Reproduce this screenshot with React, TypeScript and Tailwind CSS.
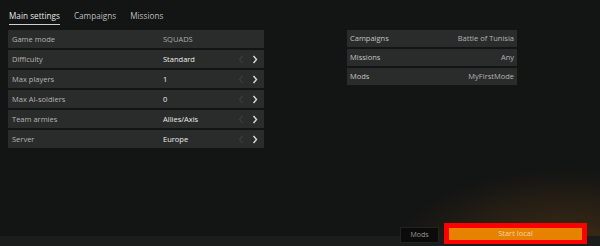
import React from 'react';

const settings = [
  { label: 'Game mode', value: 'SQUADS', arrows: false },
  { label: 'Difficulty', value: 'Standard', arrows: true },
  { label: 'Max players', value: '1', arrows: true },
  { label: 'Max AI-soldiers', value: '0', arrows: true },
  { label: 'Team armies', value: 'Allies/Axis', arrows: true },
  { label: 'Server', value: 'Europe', arrows: true },
];

const summary = [
  { label: 'Campaigns', value: 'Battle of Tunisia' },
  { label: 'Missions', value: 'Any' },
  { label: 'Mods', value: 'MyFirstMode' },
];

function Chevron({ left, dim }: { left?: boolean; dim?: boolean }) {
  return (
    <svg width="6" height="9" viewBox="0 0 6 9" className={dim ? 'text-[#3a3b3b]' : 'text-[#d8d8d8]'}>
      <path
        d={left ? 'M4.5 1 L1.5 4.5 L4.5 8' : 'M1.5 1 L4.5 4.5 L1.5 8'}
        fill="none"
        stroke="currentColor"
        strokeWidth="1.4"
      />
    </svg>
  );
}

export default function App() {
  return (
    <div
      className="relative w-[600px] h-[246px] overflow-hidden bg-[#131414] text-[#c8c8c8] flex flex-col"
      style={{ fontFamily: '"Open Sans", "DejaVu Sans", sans-serif' }}
    >
      <div className="pointer-events-none absolute inset-0 bg-[radial-gradient(ellipse_170px_80px_at_565px_250px,rgba(150,95,20,0.35),transparent)]" />
      <div className="flex gap-[14px] pl-[9px] pt-[10px] text-[8.2px]">
        <div className="flex flex-col">
          <span className="text-[#e6e6e6]">Main settings</span>
          <div className="h-[1px] mt-[2px] bg-[#cfcfcf]" />
        </div>
        <span className="text-[#bdbdbd]">Campaigns</span>
        <span className="text-[#bdbdbd]">Missions</span>
      </div>

      <div className="flex justify-between pl-[8px] pr-[83px] mt-[5px]">
        <div className="w-[256px] flex flex-col gap-[2px]">
          {settings.map((s) => (
            <div key={s.label} className="h-[18px] bg-[#2a2b2b] flex items-center text-[7.5px] pl-[4px] pr-[6px]">
              <span className="w-[151px] text-[#b4b4b4]">{s.label}</span>
              <span className={s.arrows ? 'flex-1 text-[#ececec] font-medium' : 'flex-1 text-[#a8a8a8]'}>{s.value}</span>
              {s.arrows && (
                <div className="flex items-center gap-[8px]">
                  <Chevron left dim />
                  <Chevron />
                </div>
              )}
            </div>
          ))}
        </div>

        <div className="w-[170px] flex flex-col gap-[2px]">
          {summary.map((s) => (
            <div key={s.label} className="h-[17px] bg-[#2a2b2b] flex items-center justify-between text-[7.5px] px-[3px]">
              <span className="text-[#c4c4c4]">{s.label}</span>
              <span className="text-[#b4b4b4]">{s.value}</span>
            </div>
          ))}
        </div>
      </div>

      <div className="flex-1" />
      <div className="relative flex items-end justify-end gap-[5px] pr-[13px] pb-[2px]">
        <div className="absolute left-0 right-0 bottom-0 h-[10px] bg-[#1b1c1c]" />
        <div className="relative mb-[1px] w-[39px] h-[16px] bg-[#0b0b0b] border border-[#222] flex items-center justify-center text-[7px] text-[#9a9a9a]">
          Mods
        </div>
        <div className="relative w-[143px] h-[21px] bg-[#ff0000] p-[5px] pb-[4px]">
          <div className="h-full bg-[#e68200] flex items-center justify-center text-[7.5px] text-[#f3d6a6]">
            Start local
          </div>
        </div>
      </div>
    </div>
  );
}
